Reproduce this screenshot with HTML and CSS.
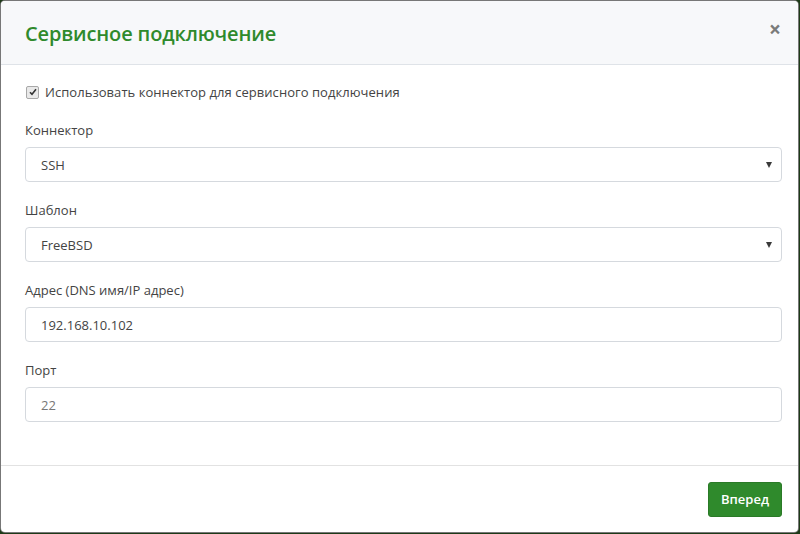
FILE: index.html
```html
<!DOCTYPE html>
<html lang="ru">
<head>
<meta charset="utf-8">
<title>Сервисное подключение</title>
<link rel="stylesheet" href="styles.css">
</head>
<body>
<div class="modal">
  <div class="modal-header">
    <h1 class="modal-title">Сервисное подключение</h1>
    <span class="close">×</span>
  </div>
  <div class="modal-body">
    <label class="check-row">
      <span class="checkbox"><svg width="8" height="8" viewBox="0 0 8 8"><path d="M1 4.2 L3 6.3 L7 1.3" fill="none" stroke="#333" stroke-width="1.6"/></svg></span>
      <span>Использовать коннектор для сервисного подключения</span>
    </label>
    <div class="group">
      <div class="label">Коннектор</div>
      <div class="field select"><span>SSH</span><span class="arrow"></span></div>
    </div>
    <div class="group">
      <div class="label">Шаблон</div>
      <div class="field select"><span>FreeBSD</span><span class="arrow"></span></div>
    </div>
    <div class="group">
      <div class="label">Адрес (DNS имя/IP адрес)</div>
      <div class="field"><span>192.168.10.102</span></div>
    </div>
    <div class="group">
      <div class="label">Порт</div>
      <div class="field muted"><span>22</span></div>
    </div>
  </div>
  <div class="modal-footer">
    <button class="btn">Вперед</button>
  </div>
</div>
</body>
</html>
```
FILE: styles.css
```css
html, body {
  margin: 0;
  padding: 0;
}
body {
  width: 800px;
  height: 534px;
  background: #1d3a17;
  font-family: "Open Sans", "Liberation Sans", sans-serif;
  font-size: 13px;
  color: #444;
  overflow: hidden;
  box-sizing: border-box;
  padding: 1px 1px 1px 1px;
}
.modal {
  width: 797px;
  height: 531px;
  background: #fff;
  border-radius: 4px;
  display: flex;
  flex-direction: column;
  overflow: hidden;
  box-shadow: 0 0 0 1px #777;
}
.modal-header {
  height: 63px;
  flex: none;
  background: #f7f8fa;
  border-bottom: 1px solid #dfe3e8;
  display: flex;
  align-items: center;
  justify-content: space-between;
  padding: 0 17px 0 24px;
}
.modal-title {
  margin: 0;
  font-size: 20px;
  font-weight: 600;
  color: #2f8a2c;
  letter-spacing: -0.15px;
  padding-top: 2px;
}
.close {
  font-size: 21px;
  font-weight: 700;
  color: #7b7b7b;
  line-height: 1;
  margin-top: -6px;
}
.modal-body {
  flex: 1;
  padding: 17px 16px 0 24px;
  display: flex;
  flex-direction: column;
  gap: 18px;
}
.check-row {
  display: flex;
  align-items: center;
  gap: 7px;
  height: 20px;
  padding-left: 1px;
}
.checkbox {
  width: 11px;
  height: 11px;
  border: 1px solid #a8a8a8;
  background: #e9e9e9;
  border-radius: 2px;
  display: flex;
  align-items: center;
  justify-content: center;
  flex: none;
}
.check-row span:last-child {
  letter-spacing: 0.05px;
  margin-left: -1px;
}
.group {
  display: flex;
  flex-direction: column;
  gap: 7px;
}
.label {
  line-height: 20px;
  height: 20px;
}
.field {
  height: 33px;
  border: 1px solid #d5d9de;
  border-radius: 4px;
  display: flex;
  align-items: center;
  justify-content: space-between;
  padding: 0 9px 0 15px;
  color: #444;
}
.field.muted {
  color: #777;
}
.arrow {
  width: 0;
  height: 0;
  border-left: 3.5px solid transparent;
  border-right: 3.5px solid transparent;
  border-top: 6px solid #3a3a3a;
  margin-top: 1px;
}
.modal-footer {
  height: 66px;
  flex: none;
  border-top: 1px solid #e2e2e2;
  display: flex;
  align-items: center;
  justify-content: flex-end;
  padding: 0 16px 0 24px;
}
.btn {
  height: 35px;
  width: 74px;
  background: #2f8a2c;
  color: #fff;
  border: 1px solid #2a7a27;
  border-radius: 3px;
  font-family: "Open Sans", "Liberation Sans", sans-serif;
  font-size: 13px;
  font-weight: 600;
  padding: 0;
}
```
